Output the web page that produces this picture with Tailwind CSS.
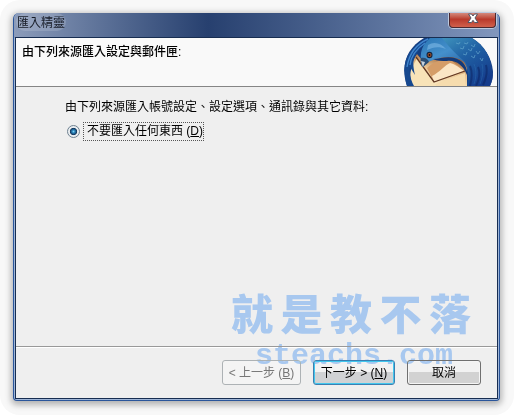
<!DOCTYPE html>
<html lang="zh-Hant">
<head>
  <meta charset="UTF-8" />
  <meta name="viewport" content="width=device-width, initial-scale=1" />
  <title>匯入精靈</title>
  <script src="https://cdn.jsdelivr.net/npm/@tailwindcss/browser@4"></script>
</head>
<body class="bg-white text-black text-[12px] leading-4 font-['Liberation_Sans','Noto_Sans_CJK_TC',sans-serif]">

  <div class="min-h-screen flex bg-[#f8f8f8] rounded-[20px] p-[13px] pr-[14px] pb-[14px]">
    <main class="relative flex-1 flex flex-col rounded-t-md rounded-b-sm px-0.5 pb-0.5 border-x border-b border-[#2b569b] bg-[#9fb6d8] shadow-[0_2px_6px_2px_rgba(0,0,0,0.28)]">

      <header class="-mx-0.5 -mb-px h-[25px] flex items-start justify-between rounded-t-md bg-linear-to-r from-[#8c9cba] via-[#27406f] via-40% to-[#8297bd] pl-0.5 pr-[3px]">
        <h1 class="pt-0.5 px-px rounded-full bg-white/15 text-[#161b26]">匯入精靈</h1>
        <button type="button" aria-label="關閉" class="w-[47px] h-[15px] flex justify-center rounded-b-[4px] border border-t-0 border-[#4b2930] bg-linear-to-b from-[#d3897d] via-[#b9392b] via-45% to-[#d1604c] shadow-[0_0_0_1px_#bcc9de]">
          <svg class="w-3 h-3" viewBox="0 0 12 12">
            <path d="M1.500 1h3L6 3l1.500-2h3L8 5l3 4.500H7.500L6 7.300 4.500 9.500H1L4 5z" fill="#fff" stroke="#535666" />
          </svg>
        </button>
      </header>

      <div class="flex-1 flex flex-col -mx-px -mb-px border border-[#172d51] bg-[#efefef]">
        <section class="h-[49px] flex justify-between border-b border-[#858585] bg-[#f9f9f9] pl-1.5 pr-1">
          <h2 class="pt-1.5 font-medium">由下列來源匯入設定與郵件匣:</h2>
          <svg class="w-[89px] h-12 shrink-0" viewBox="0 0 89 48" aria-hidden="true">
            <defs>
              <clipPath id="ball"><path d="M20 0h48c12 7 20 20 21 34 0 5-1 10-3 14H3C-4 27 3 10 20 0z" /></clipPath>
              <linearGradient id="wing" x1="0" y1="0" x2=".7" y2="1">
                <stop offset="0" stop-color="#3f93bd" />
                <stop offset=".45" stop-color="#2061a4" />
                <stop offset="1" stop-color="#153c8c" />
              </linearGradient>
              <linearGradient id="head" x1="0" y1="0" x2=".6" y2="1">
                <stop offset="0" stop-color="#2a76b4" />
                <stop offset=".4" stop-color="#4590cc" />
                <stop offset="1" stop-color="#174a90" />
              </linearGradient>
              <linearGradient id="paper" x1=".7" y1="0" x2=".3" y2="1">
                <stop offset="0" stop-color="#8e4a1f" />
                <stop offset=".5" stop-color="#e9c593" />
                <stop offset="1" stop-color="#fff0cc" />
              </linearGradient>
            </defs>
            <g clip-path="url(#ball)">
              <path d="M0 0h89v48H0z" fill="#153e80" />
              <!-- envelope -->
              <path d="M13 16C7 24 5 37 9 48h54V24L45 16 18 22z" fill="url(#paper)" />
              <path d="m13 20 17 24 2 4H9C6 42 6 36 7 32z" fill="#f8e3b8" />
              <path d="m23 30 7 14 30-11-13-11c-8-1-17 1-24 8z" fill="#d59d68" />
              <path d="M28 38c8-4 13-11 18-13 5 1 10 5 14 8L30 44z" fill="#fbe6c6" />
              <path d="M31 46 61 35v13H32z" fill="#f6dcae" />
              <path d="m12 19 18 25 31-11" fill="none" stroke="#633823" stroke-width="1.300" />
              <!-- tail -->
              <path d="M26 0C10 5 0 18 0 32l2 16h8C6 40 5 35 6 29l5 8C9 28 8 21 13 15 16 10 21 5 30 0z" fill="#16488f" />
              <path d="M24 1C13 6 5 16 3 29M21 5C12 11 7 18 6 27" fill="none" stroke="#3f84cc" stroke-width="1.400" />
              <!-- head -->
              <path d="M26 0h22c11 4 21 19 25 48H63c2-9 1-18-3-24-8-6-18-6-28-3l-8 3-6 5c-2-9-3-20 8-29z" fill="url(#head)" />
              <path d="M24 7c6-4 13-2 18 4-7-3-13-2-19 1z" fill="#7fb9e6" opacity=".6" />
              <path d="M29 21c9 0 17-5 28 2 4 3 7 9 6 14-4-10-11-15-20-14-5 0-10 0-14-2z" fill="#123a7a" />
              <path d="M17 20c4-1 7 1 8 4l-6 5c-2-3-3-6-2-9z" fill="#2b4d72" />
              <path d="m17 23 4 1-2 5z" fill="#c7d2dc" />
              <ellipse cx="25.500" cy="17" rx="3" ry="3.300" fill="#10233d" />
              <circle cx="25.500" cy="17" r="2" fill="#a6522c" />
              <circle cx="25.500" cy="17" r="1" fill="#180e0b" />
              <!-- wing -->
              <path d="M38 0h32c12 8 20 22 19 48H64c3-9 2-17-3-24C53 17 46 10 38 0z" fill="url(#wing)" />
              <g fill="none" stroke="#6cafd2" stroke-opacity=".6">
                <path d="m52 5 3 1 1-2M60 5l3 1 1-2M67 7l3 2 1-3" />
                <path d="m56 10 3 1 1-3M64 11l3 2 1-3M72 13l2 3 2-3" />
                <path d="m59 16 3 1 1-3M67 18l3 2 1-3M76 20l2 3 1-3" />
              </g>
              <path d="M66 28c3 7 2 13 0 20M74 29c3 7 1 13-2 19M82 27c2 8 0 14-3 20" fill="none" stroke="#0d2463" stroke-opacity=".55" stroke-width="2" />
              <path d="M70 26c3 7 2 14 0 20M78 26c2 8 0 14-2 20" fill="none" stroke="#347dba" stroke-opacity=".35" />
            </g>
          </svg>
        </section>

        <form id="import" class="flex-1 pl-[49px] pt-3">
          <fieldset>
            <legend>由下列來源匯入帳號設定、設定選項、通訊錄與其它資料:</legend>
            <label class="mt-[7px] flex items-center gap-[3px]">
              <input type="radio" name="source" value="nothing" accesskey="d" checked
                class="appearance-none ml-0.5 size-[13px] rounded-full border border-[#6f8291] bg-[radial-gradient(circle,#7fd0f2_0,#2a86bd_18%,#14365c_42%,#e9edf0_52%)]" />
              <span class="h-[19px] border border-dotted border-[#555] pl-[3px]">不要匯入任何東西 (<u>D</u>)</span>
            </label>
          </fieldset>
        </form>

        <footer class="h-[52px] flex items-start justify-end gap-3 border-t border-[#999] shadow-[inset_0_1px_#fff] pt-[13px] pr-4">
          <button type="button" disabled accesskey="b" class="w-[79px] h-[25px] rounded-[3px] border border-[#adb2b5] bg-[#f4f4f4] text-[#777]">&lt; 上一步 (<u>B</u>)</button>
          <button type="submit" form="import" accesskey="n" class="w-[82px] h-[25px] rounded-[3px] border border-[#3c7fb1] bg-linear-to-b from-[#f2f2f2] from-50% to-[#d0d2d4] to-50% shadow-[inset_0_0_0_1px_#42c7ee]">下一步 &gt; (<u>N</u>)</button>
          <button type="button" class="w-[74px] h-[25px] rounded-[3px] border border-[#707070] bg-linear-to-b from-[#f2f2f2] from-50% to-[#d2d2d2] to-50% shadow-[inset_0_0_0_1px_#f5f5f5]">取消</button>
        </footer>
      </div>

      <!-- site mark, floats over the dialog -->
      <div class="absolute right-7 bottom-7 w-60 text-[#a8c8f0] pointer-events-none mix-blend-darken">
        <div class="flex justify-between text-[42px] leading-[48px] font-black">
          <span>就</span><span>是</span><span>教</span><span>不</span><span>落</span>
        </div>
        <div class="pl-6 text-[30px] leading-8 font-bold font-['Liberation_Mono',monospace]">steachs.com</div>
      </div>
    </main>
  </div>

</body>
</html>
